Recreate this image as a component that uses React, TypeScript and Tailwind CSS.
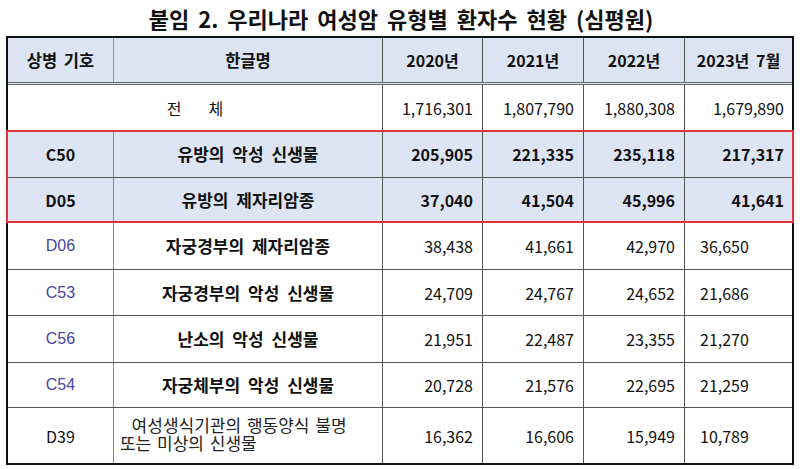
import React from "react";

const cols = "grid grid-cols-[106px_269px_100px_101px_101px_1fr]";
const cell = "flex items-center border-r border-[#555]";
const numCell = "flex items-center justify-end pr-[9px] border-r border-[#555]";

type Row = { code: string; name: string; nums: string[]; h: string };

const lower: Row[] = [
  { code: "D06", name: "자궁경부의 제자리암종", nums: ["38,438", "41,661", "42,970", "36,650"], h: "h-[47px]" },
  { code: "C53", name: "자궁경부의 악성 신생물", nums: ["24,709", "24,767", "24,652", "21,686"], h: "h-[46px]" },
  { code: "C56", name: "난소의 악성 신생물", nums: ["21,951", "22,487", "23,355", "21,270"], h: "h-[47px]" },
  { code: "C54", name: "자궁체부의 악성 신생물", nums: ["20,728", "21,576", "22,695", "21,259"], h: "h-[45px]" },
];

export default function App() {
  return (
    <div className="w-[800px] h-[469px] bg-white text-[#111] font-['Noto_Sans_CJK_KR','Noto_Sans',sans-serif] overflow-hidden">
      <div className="h-[36px] flex items-center justify-center text-[22px] font-bold [word-spacing:4px] pl-[2px]">
        붙임 2. 우리나라 여성암 유형별 환자수 현황 (심평원)
      </div>
      <div className="ml-[6px] w-[788px] border-2 border-[#111] text-[16px]">
        {/* header */}
        <div className={`${cols} h-[47px] bg-[#dce4f4] border-b-[3px] border-double border-[#666] font-bold [word-spacing:3px]`}>
          <div className={`${cell} justify-center border-[#999] text-[16.5px]`}>상병 기호</div>
          <div className={`${cell} justify-center text-[16.5px]`}>한글명</div>
          <div className={`${cell} justify-center`}>2020년</div>
          <div className={`${cell} justify-center`}>2021년</div>
          <div className={`${cell} justify-center`}>2022년</div>
          <div className="flex items-center justify-center">2023년 7월</div>
        </div>
        {/* total */}
        <div className={`${cols} h-[45px]`}>
          <div className="col-span-2 flex items-center justify-center gap-[27px] border-r border-[#555]">
            <span>전</span>
            <span>체</span>
          </div>
          <div className={numCell}>1,716,301</div>
          <div className={numCell}>1,807,790</div>
          <div className={numCell}>1,880,308</div>
          <div className="flex items-center justify-end pr-[8px]">1,679,890</div>
        </div>
        {/* highlighted */}
        <div className="relative border-t border-[#555] bg-[#dde5f5] font-bold">
          <div className={`${cols} h-[47px] border-b border-[#555]`}>
            <div className={`${cell} justify-center border-[#888]`}>C50</div>
            <div className={`${cell} justify-center text-[17px] [word-spacing:4px]`}>유방의 악성 신생물</div>
            <div className={numCell}>205,905</div>
            <div className={numCell}>221,335</div>
            <div className={numCell}>235,118</div>
            <div className="flex items-center justify-end pr-[8px]">217,317</div>
          </div>
          <div className={`${cols} h-[44px]`}>
            <div className={`${cell} justify-center border-[#888]`}>D05</div>
            <div className={`${cell} justify-center text-[17px] [word-spacing:4px]`}>유방의 제자리암종</div>
            <div className={numCell}>37,040</div>
            <div className={numCell}>41,504</div>
            <div className={numCell}>45,996</div>
            <div className="flex items-center justify-end pr-[8px]">41,641</div>
          </div>
          <div className="absolute -left-[2px] -right-[2px] -top-[1px] -bottom-[1px] border-2 border-[#e0343c] pointer-events-none" />
        </div>
        {/* lower rows */}
        {lower.map((r) => (
          <div key={r.code} className={`${cols} ${r.h} border-t border-[#555]`}>
            <div className={`${cell} justify-center border-[#888] font-['Liberation_Sans',sans-serif] text-[16px] text-[#4646a3]`}>
              {r.code}
            </div>
            <div className={`${cell} justify-center font-bold text-[17px] [word-spacing:4px]`}>{r.name}</div>
            <div className={numCell}>{r.nums[0]}</div>
            <div className={numCell}>{r.nums[1]}</div>
            <div className={numCell}>{r.nums[2]}</div>
            <div className="flex items-center pl-[15px]">{r.nums[3]}</div>
          </div>
        ))}
        <div className={`${cols} h-[56px] border-t border-[#555]`}>
          <div className={`${cell} justify-center border-[#888]`}>D39</div>
          <div className={`${cell} pl-[6px] pb-[3px] text-[17px] leading-[18px] text-[#222] [word-spacing:2px]`}>
            <p className="whitespace-pre">{"  여성생식기관의 행동양식 불명\n또는 미상의 신생물"}</p>
          </div>
          <div className={numCell}>16,362</div>
          <div className={numCell}>16,606</div>
          <div className={numCell}>15,949</div>
          <div className="flex items-center pl-[15px]">10,789</div>
        </div>
      </div>
    </div>
  );
}
